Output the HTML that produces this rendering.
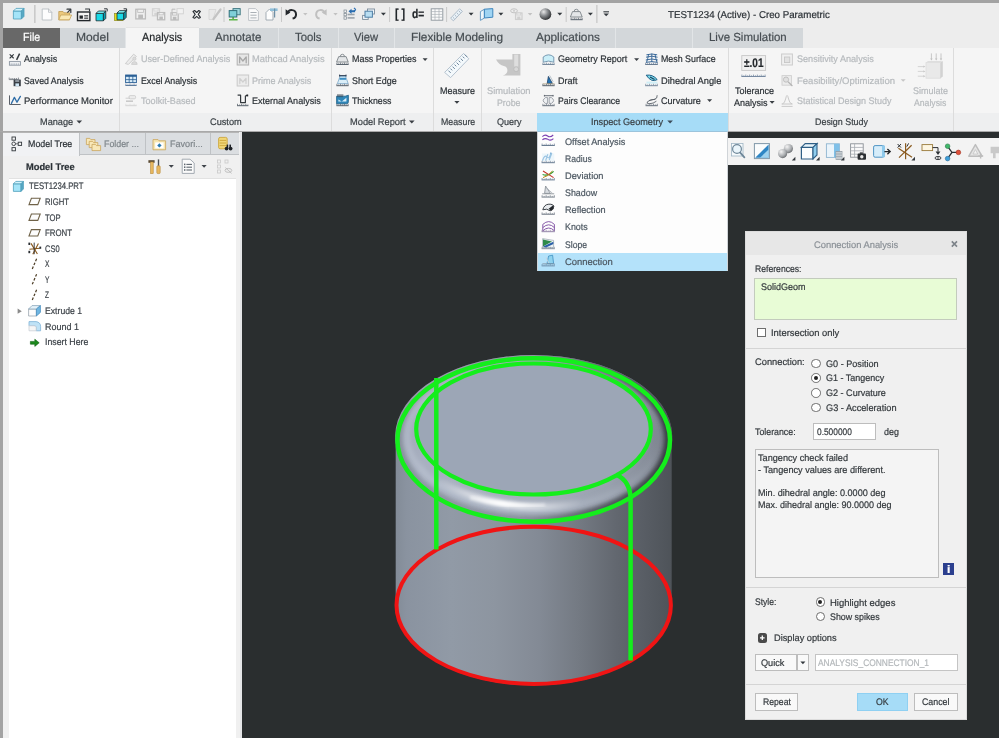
<!DOCTYPE html>
<html><head><meta charset="utf-8"><title>Creo Parametric</title>
<style>
*{box-sizing:border-box;margin:0;padding:0}
html,body{width:999px;height:738px;overflow:hidden;background:#a3a3a3}
body{font-family:"Liberation Sans",sans-serif;font-size:11px;color:#2d3338;position:relative;text-rendering:geometricPrecision}
.abs,.t,.tab,.sep,.ico,svg{position:absolute}
.t{white-space:nowrap;transform-origin:0 50%;color:#2b3136;-webkit-text-stroke:0.2px currentColor}
.dis{color:#b6babd}
.w{color:#fff}
#title{left:3px;top:2.6px;width:996px;height:46px;background:#ededed}
#tabs{left:3px;top:28.4px;width:996px;height:19.6px;background:#f0f0f0}
#tabbg{left:3px;top:28.4px;width:800px;height:19.6px;background:#e2e5e7}
.tab{top:0;height:19.6px;background:#d3d7da}
.tab.file{background:#686868}
.tab.act{background:#f5f5f5;top:-1.6px;height:21.2px;border-top:1px solid #e4e4e4}
#ribbon{left:3px;top:48px;width:996px;height:65px;background:#f5f5f5}
#labels{left:3px;top:113px;width:996px;height:18px;background:#eeeff0}
#insp{left:537px;top:113px;width:191px;height:18px;background:#a6dcf7}
.sep{top:48px;width:1px;height:83px;background:#dcdcdc}
#gfx{left:242px;top:132px;width:757px;height:606px;background:#2a2e2f}
#left{left:3px;top:132px;width:239px;height:606px;background:#f0f0f0}
.tb{color:#464d52}
.tba{color:#1f2326}
.lb{color:#3a4045}
.pt{color:#2b3136}
.ptg{color:#7d8489}
.hd{color:#2b3136}
.tr{color:#3c4248}
.mn{color:#4b5660}
.dt{color:#8b9197}
.dl{color:#33383c}
.ph{color:#b3b7ba}
#ptabs{left:3px;top:132px;width:236px;height:23px;background:#dcdcdc;border-top:1px solid #b5b5b5}
.ptab{position:absolute;top:0;height:22px;border-right:1px solid #bfc2c5;border-bottom:1px solid #bfc2c5;background:#dbdee1}
.ptab.on{background:#f1f2f4;border-bottom:none;height:23px}
#tree{left:9.4px;top:178px;width:227px;height:560px;background:#fff;border-top:1px solid #e2e2e2}
#lstrip{left:239.5px;top:132px;width:2.5px;height:606px;background:#e4e5e7}
#uline{left:0;top:130.6px;width:999px;height:1.9px;background:#a9a9a9}
#gtb{left:728px;top:138px;width:271px;height:27px;background:#f3f3f3}
#menu{left:537px;top:131px;width:191px;height:140px;background:#fdfdfd;border:1px solid #d0d4d8;border-top:1px solid #9cc4dc}
#menuhl{left:538px;top:253px;width:189px;height:17.5px;background:#b4e2fa}
#dlg{left:745.2px;top:231.2px;width:221.8px;height:488.8px;background:#f0f0f0;border:1px solid #dcdcdc}
#dlgt{left:746.2px;top:232.2px;width:219.8px;height:22.8px;background:#e7e7e7}
.hr{position:absolute;left:746.2px;width:219.8px;height:1px;background:#d4d4d4}
.box{position:absolute;border:1px solid #bdbdbd;background:#fff}
.btn{position:absolute;border:1px solid #bdbdbd;background:#f9f9f9}
.rad{position:absolute;width:9.6px;height:9.6px;border:1px solid #6e6e6e;border-radius:50%;background:#fff}
.rad.on::after{content:"";position:absolute;left:1.8px;top:1.8px;width:4px;height:4px;border-radius:50%;background:#222}
.qa{color:#22262a}

</style></head><body>
<div id="title" class="abs"></div>
<div id="tabbg" class="abs"></div>
<div id="tabs" class="abs" style="background:none"><div class="tab file" style="left:0.0px;width:57.2px"></div><div class="tab " style="left:57.2px;width:64.8px"></div><div class="tab act" style="left:122.6px;width:73.4px"></div><div class="tab " style="left:196.0px;width:78.7px"></div><div class="tab " style="left:275.5px;width:59.3px"></div><div class="tab " style="left:335.6px;width:55.6px"></div><div class="tab " style="left:392.0px;width:124.6px"></div><div class="tab " style="left:517.4px;width:94.6px"></div><div class="tab " style="left:612.8px;width:76.2px"></div><div class="tab " style="left:689.8px;width:110.2px"></div></div>
<div id="ribbon" class="abs"></div>
<div id="labels" class="abs"></div>
<div id="insp" class="abs"></div>
<div class="sep" style="left:119px"></div><div class="sep" style="left:331px"></div><div class="sep" style="left:433px"></div><div class="sep" style="left:481px"></div><div class="sep" style="left:728px"></div><div class="sep" style="left:953px"></div>
<div id="left" class="abs"></div>
<div id="gfx" class="abs"></div>
<div id="uline" class="abs"></div>
<div id="ptabs" class="abs"><div class="ptab on" style="left:0;width:77px"></div><div class="ptab" style="left:77px;width:65.5px"></div><div class="ptab" style="left:142.5px;width:65.5px"></div><div class="ptab" style="left:208px;width:28px;border-right:none"></div></div>
<div id="tree" class="abs"></div>
<div id="lstrip" class="abs"></div>
<svg id="model" style="left:242px;top:132px" width="757" height="606" viewBox="242 132 757 606">
<defs>
<linearGradient id="gside" x1="396" x2="672" y1="0" y2="0" gradientUnits="userSpaceOnUse">
<stop offset="0" stop-color="#838c98"/><stop offset="0.04" stop-color="#8a93a0"/><stop offset="0.2" stop-color="#919aa6"/><stop offset="0.36" stop-color="#8d95a0"/><stop offset="0.52" stop-color="#838a95"/><stop offset="0.66" stop-color="#747a83"/><stop offset="0.8" stop-color="#62676f"/><stop offset="0.92" stop-color="#565b62"/><stop offset="1" stop-color="#4e5359"/>
</linearGradient>
<linearGradient id="ground" x1="396" x2="672" y1="0" y2="0" gradientUnits="userSpaceOnUse">
<stop offset="0" stop-color="#9aa3b2"/><stop offset="0.1" stop-color="#a8b0c0"/><stop offset="0.5" stop-color="#a7afbd"/><stop offset="0.78" stop-color="#98a0ad"/><stop offset="0.92" stop-color="#868d99"/><stop offset="1" stop-color="#70767f"/>
</linearGradient>
<linearGradient id="gdark" x1="396" x2="672" y1="0" y2="0" gradientUnits="userSpaceOnUse">
<stop offset="0" stop-color="#4a4e55" stop-opacity="0.25"/><stop offset="0.45" stop-color="#4a4e55" stop-opacity="0.3"/><stop offset="0.75" stop-color="#3c4046" stop-opacity="0.75"/><stop offset="1" stop-color="#34383d" stop-opacity="0.95"/>
</linearGradient>
<linearGradient id="gmid" x1="396" x2="672" y1="0" y2="0" gradientUnits="userSpaceOnUse">
<stop offset="0" stop-color="#c4ccda" stop-opacity="0.45"/><stop offset="0.5" stop-color="#c0c8d6" stop-opacity="0.45"/><stop offset="0.85" stop-color="#b4bcc9" stop-opacity="0.2"/><stop offset="1" stop-color="#b4bcc9" stop-opacity="0"/>
</linearGradient>
<linearGradient id="ghl" x1="436" x2="585" y1="0" y2="0" gradientUnits="userSpaceOnUse">
<stop offset="0" stop-color="#fff" stop-opacity="0"/><stop offset="0.25" stop-color="#fff" stop-opacity="0.6"/><stop offset="0.45" stop-color="#fff" stop-opacity="1"/><stop offset="0.65" stop-color="#fff" stop-opacity="0.6"/><stop offset="1" stop-color="#fff" stop-opacity="0"/>
</linearGradient>
<filter id="b2" x="-20%" y="-20%" width="140%" height="140%"><feGaussianBlur stdDeviation="2.2"/></filter>
<filter id="b1" x="-20%" y="-20%" width="140%" height="140%"><feGaussianBlur stdDeviation="1.5"/></filter>
<clipPath id="csil"><ellipse cx="533.7" cy="436" rx="138.5" ry="81"/><ellipse cx="533.7" cy="440" rx="138" ry="83.4"/></clipPath>
</defs>
<path d="M395.7 438 L395.7 605.3 A138 80 0 0 0 671.7 605.3 L671.7 438 Z" fill="url(#gside)"/>
<g clip-path="url(#csil)">
<rect x="390" y="350" width="290" height="180" fill="url(#ground)"/>
<ellipse cx="533.7" cy="439" rx="135" ry="81" fill="none" stroke="url(#gdark)" stroke-width="9" filter="url(#b2)"/>
<ellipse cx="533.6" cy="435.5" rx="127" ry="74" fill="none" stroke="url(#gmid)" stroke-width="7" filter="url(#b2)"/>
<path d="M440 481 Q466 497 503 503.6 T580 502.5" fill="none" stroke="url(#ghl)" stroke-width="6" filter="url(#b2)"/>
<path d="M470 497.5 Q486 502 505 504 T545 505" fill="none" stroke="url(#ghl)" stroke-width="3.4" filter="url(#b1)"/>
</g>
<ellipse cx="533.5" cy="429.3" rx="117.5" ry="65.3" fill="#9ca6b6"/>
<g fill="none" stroke-linecap="butt">
<ellipse cx="533.7" cy="605.3" rx="137.2" ry="78.6" stroke="#f01414" stroke-width="4"/>
<path d="M436.3 378 L436.3 549.5" stroke="#14ee1c" stroke-width="4.5"/>
<path d="M616 474.5 Q630.6 481 630.6 500 L630.6 660.5" stroke="#14ee1c" stroke-width="4.5"/>
<ellipse cx="533.7" cy="440" rx="136.3" ry="81.8" stroke="#14ee1c" stroke-width="4.5"/>
<ellipse cx="533.5" cy="429" rx="117.3" ry="65.5" stroke="#14ee1c" stroke-width="4.2"/>
</g>
</svg>
<div id="gtb" class="abs"></div>
<div id="menu" class="abs"></div>
<div id="menuhl" class="abs"></div>
<div id="dlg" class="abs"></div>
<div id="dlgt" class="abs"></div>
<div class="hr" style="top:348px"></div>
<div class="hr" style="top:587px"></div>
<div class="hr" style="top:684px"></div>
<div class="box" style="left:754.4px;top:278px;width:203px;height:42.4px;background:#e8fcd6;border-color:#c3cbbd"></div>
<div class="box" style="left:756.5px;top:327.5px;width:9.5px;height:9.5px;border-color:#6e6e6e"></div>
<div class="rad" style="left:811px;top:358.5px"></div>
<div class="rad on" style="left:811px;top:373.2px"></div>
<div class="rad" style="left:811px;top:388.1px"></div>
<div class="rad" style="left:811px;top:402.8px"></div>
<div class="box" style="left:813px;top:423px;width:62.6px;height:17.4px"></div>
<div class="box" style="left:755px;top:449px;width:183.5px;height:128.5px;background:#f4f4f4"></div>
<div class="abs" style="left:942.5px;top:563px;width:11.5px;height:12px;background:#2b3f8e"></div>
<div class="rad on" style="left:815.5px;top:597.3px"></div>
<div class="rad" style="left:815.5px;top:611.8px"></div>
<div class="abs" style="left:757.5px;top:633px;width:9.5px;height:9.5px;background:#4a4a4a;border-radius:2.5px"></div>
<div class="btn" style="left:755px;top:654px;width:42px;height:17px"></div>
<div class="btn" style="left:796.5px;top:654px;width:12.5px;height:17px"></div>
<div class="box" style="left:814.5px;top:654px;width:143px;height:17px;border-color:#c4c4c4"></div>
<div class="btn" style="left:755px;top:693px;width:43px;height:17.5px"></div>
<div class="btn" style="left:857px;top:693px;width:50.5px;height:17.5px;background:#a6dcf7;border-color:#8fd0f2"></div>
<div class="btn" style="left:914px;top:693px;width:43.5px;height:17.5px"></div>

<!--ICONS--><svg id="icons" style="left:0;top:0;pointer-events:none" width="999" height="738" viewBox="0 0 999 738">
<path d="M13.4 11L21.4 11L21.4 19L13.4 19Z" fill="#a4e4f8" stroke="#4f9fbb" stroke-width="0.8"/>
<path d="M13.4 11L16 8.4L24 8.4L21.4 11Z" fill="#d2f3fc" stroke="#4f9fbb" stroke-width="0.8"/>
<path d="M21.4 11L24 8.4L24 16.4L21.4 19Z" fill="#58a9c4" stroke="#4f9fbb" stroke-width="0.8"/>
<path d="M34.9 5L34.9 23" stroke="#b4b4b4" stroke-width="1" fill="none"/>
<path d="M42.2 9L48.5 9L51.8 12.3L51.8 20L42.2 20Z" fill="#fdfdfd" stroke="#b9bec3" stroke-width="0.9"/>
<path d="M48.5 9L48.5 12.3L51.8 12.3" fill="none" stroke="#b9bec3" stroke-width="0.8" stroke-linejoin="round" stroke-linecap="round"/>
<path d="M58.8 11.5L63 11.5L64 12.8L69.5 12.8L69.5 19.8L58.8 19.8Z" fill="#ecc97c" stroke="#c09a50" stroke-width="0.8"/>
<path d="M60.8 15L71.6 15L69.5 19.8L58.8 19.8Z" fill="#fbe9b4" stroke="#c8a45c" stroke-width="0.8"/>
<path d="M67 9.2L70.8 9.2L70.8 12.6" fill="none" stroke="#33383d" stroke-width="1.2" stroke-linejoin="round" stroke-linecap="round"/>
<path d="M70.5 9.5L67.3 12.6" stroke="#33383d" stroke-width="1.1" fill="none"/>
<rect x="77.5" y="12" width="12.4" height="8.6" fill="#f4f4f4" stroke="#23272b" stroke-width="1.4"/>
<rect x="79.5" y="15.5" width="3.4" height="3.2" fill="#23272b"/>
<rect x="84.2" y="15.3" width="4" height="1.1" fill="#23272b"/>
<rect x="84.2" y="17.6" width="4" height="1.1" fill="#23272b"/>
<path d="M85.5 9L89.5 9L89.5 11" fill="none" stroke="#33383d" stroke-width="1.1" stroke-linejoin="round" stroke-linecap="round"/>
<path d="M96 13.4L103.4 13.4L103.4 20.8L96 20.8Z" fill="#19d9e6" stroke="#1d2b30" stroke-width="0.8"/>
<path d="M96 13.4L98.4 11L105.8 11L103.4 13.4Z" fill="#7ff1f5" stroke="#1d2b30" stroke-width="0.8"/>
<path d="M103.4 13.4L105.8 11L105.8 18.4L103.4 20.8Z" fill="#0a9fb0" stroke="#1d2b30" stroke-width="0.8"/>
<path d="M104.5 8.8L107.2 8.8L107.2 11" fill="none" stroke="#33383d" stroke-width="1" stroke-linejoin="round" stroke-linecap="round"/>
<rect x="114.6" y="13.6" width="8.4" height="7" fill="#e6e01c" stroke="#8c8a20" stroke-width="0.7"/>
<path d="M117 13L123.8 13L123.8 19.8L117 19.8Z" fill="#19d9e6" stroke="#1d2b30" stroke-width="0.8"/>
<path d="M117 13L119.4 10.6L126.2 10.6L123.8 13Z" fill="#7ff1f5" stroke="#1d2b30" stroke-width="0.8"/>
<path d="M123.8 13L126.2 10.6L126.2 17.4L123.8 19.8Z" fill="#0a9fb0" stroke="#1d2b30" stroke-width="0.8"/>
<path d="M124 8.8L126.6 8.8L126.6 11" fill="none" stroke="#33383d" stroke-width="1" stroke-linejoin="round" stroke-linecap="round"/>
<rect x="135.8" y="9.3" width="9.6" height="9.6" fill="#efefef" stroke="#bcbcbc" stroke-width="1.3"/>
<rect x="138.2" y="14.58" width="4.8" height="4.32" fill="#bcbcbc"/>
<rect x="137.72" y="9.3" width="5.76" height="3.07" fill="#efefef" stroke="#bcbcbc" stroke-width="0.8"/>
<rect x="152.5" y="8.8" width="7" height="7" fill="#efefef" stroke="#d4d4d4" stroke-width="1.3"/>
<rect x="154.25" y="12.65" width="3.5" height="3.15" fill="#d4d4d4"/>
<rect x="153.9" y="8.8" width="4.2" height="2.24" fill="#efefef" stroke="#d4d4d4" stroke-width="0.8"/>
<rect x="157.5" y="12.6" width="7.2" height="7.2" fill="#efefef" stroke="#bcbcbc" stroke-width="1.3"/>
<rect x="159.3" y="16.56" width="3.6" height="3.24" fill="#bcbcbc"/>
<rect x="158.94" y="12.6" width="4.32" height="2.3" fill="#efefef" stroke="#bcbcbc" stroke-width="0.8"/>
<rect x="171" y="12.8" width="7.2" height="7.2" fill="#efefef" stroke="#bcbcbc" stroke-width="1.3"/>
<rect x="172.8" y="16.76" width="3.6" height="3.24" fill="#bcbcbc"/>
<rect x="172.44" y="12.8" width="4.32" height="2.3" fill="#efefef" stroke="#bcbcbc" stroke-width="0.8"/>
<rect x="177" y="8.6" width="6.4" height="5.2" fill="#f2f2f2" stroke="#d4d4d4" stroke-width="1"/>
<path d="M172 11.5L172 9.2L175 9.2" fill="none" stroke="#bcbcbc" stroke-width="1" stroke-linejoin="round" stroke-linecap="round"/>
<path d="M193 11.4l1.6-0.9 2.1 2 2.1-2 1.6 0.9-2.2 3 2.2 3-1.6 0.9-2.1-2-2.1 2-1.6-0.9 2.2-3z" fill="#f6f6f6" stroke="#2b3035" stroke-width="1.1" stroke-linejoin="round"/>
<path d="M209 9.5L216 9.5L213 19.5L209 19.5Z" fill="#e9e9e9" stroke="#d4d4d4" stroke-width="0.8"/>
<path d="M220.5 9.5L213.5 19" stroke="#c4c4c4" stroke-width="2.2" fill="none" stroke-linecap="round"/>
<path d="M224 7L224 22" stroke="#c8c8c8" stroke-width="1" fill="none"/>
<rect x="233" y="8.6" width="7.2" height="6.2" fill="#9fd6dc" stroke="#39727c" stroke-width="0.9"/>
<rect x="229.2" y="10.6" width="7.6" height="6.4" fill="#7fd0d8" stroke="#2f6f7a" stroke-width="1"/>
<rect x="232.4" y="17" width="1.4" height="2.2" fill="#4a9a3a"/>
<rect x="229" y="19" width="8.6" height="1.5" fill="#5fb54a"/>
<path d="M248.6 8.6L255.4 8.6L258.4 11.4L258.4 20.4L248.6 20.4Z" fill="#fbfbfb" stroke="#b9bec3" stroke-width="0.9"/>
<path d="M250.4 12.5L256.6 12.5" stroke="#aab0b6" stroke-width="1" fill="none"/>
<path d="M250.4 15.2L256.6 15.2" stroke="#aab0b6" stroke-width="1" fill="none"/>
<path d="M250.4 17.9L256.6 17.9" stroke="#aab0b6" stroke-width="1" fill="none"/>
<path d="M266 12.5L269.5 9L273 12.5L273 20L266 20Z" fill="#fdfdfd" stroke="#9aa4ad" stroke-width="0.9"/>
<rect x="270" y="8.4" width="7.6" height="2.6" fill="#8fbfd9"/>
<path d="M274.6 8.4L274.6 17.5" stroke="#6f8fa6" stroke-width="1.2" fill="none"/>
<path d="M281.5 7L281.5 22" stroke="#c8c8c8" stroke-width="1" fill="none"/>
<path d="M287.6 13.2 A4.3 4.3 0 1 1 292.6 18.6" fill="none" stroke="#24282c" stroke-width="2" stroke-linecap="butt"/>
<path d="M285.6 9.2L290.4 12.6L285.6 15.4Z" fill="#24282c"/>
<path d="M303.1 12.9L307.5 12.9L305.3 15.5Z" fill="#c2c2c2"/>
<path d="M324.6 13.2 A4.3 4.3 0 1 0 319.6 18.6" fill="none" stroke="#c0c0c0" stroke-width="2"/>
<path d="M326.6 9.2L321.8 12.6L326.6 15.4Z" fill="#c0c0c0"/>
<path d="M333.3 12.9L337.7 12.9L335.5 15.5Z" fill="#c2c2c2"/>
<rect x="344" y="10" width="2.4" height="2.4" fill="#f4f4f4" stroke="#7d8891" stroke-width="0.7"/>
<rect x="344" y="13.4" width="2.4" height="2.4" fill="#f4f4f4" stroke="#7d8891" stroke-width="0.7"/>
<rect x="344" y="16.8" width="2.4" height="2.4" fill="#f4f4f4" stroke="#7d8891" stroke-width="0.7"/>
<path d="M347.6 14.5L354.6 14.5" stroke="#9aa3ab" stroke-width="1.6" fill="none"/>
<path d="M347.6 17.9L354.6 17.9" stroke="#9aa3ab" stroke-width="1.6" fill="none"/>
<path d="M348.5 11.3l3-2.6v1.6h3.6v2h-3.6v1.6z" fill="#2a6db0"/>
<path d="M355.8 9.6l-1.8-1.7M355.8 9.6l-1.8 1.7" fill="none" stroke="#2a6db0" stroke-width="1.2"/>
<rect x="367.5" y="9" width="7" height="5" fill="#f1f6fa" stroke="#7b8c9b" stroke-width="0.9"/>
<rect x="362.6" y="15.4" width="5.6" height="4" fill="#f1f6fa" stroke="#7b8c9b" stroke-width="0.9"/>
<rect x="365" y="11.2" width="7.4" height="6" fill="#b9def2" stroke="#4f7fa6" stroke-width="1"/>
<path d="M380.9 12.8L385.9 12.8L383.4 15.6Z" fill="#33383d"/>
<path d="M389.6 7L389.6 22" stroke="#c8c8c8" stroke-width="1" fill="none"/>
<rect x="431.2" y="8.8" width="11.6" height="11.4" fill="#fbfbfb" stroke="#8d959c" stroke-width="0.9"/>
<path d="M431.2 11.6L442.8 11.6" stroke="#a9afb5" stroke-width="0.7" fill="none"/>
<path d="M431.2 14.4L442.8 14.4" stroke="#a9afb5" stroke-width="0.7" fill="none"/>
<path d="M431.2 17.2L442.8 17.2" stroke="#a9afb5" stroke-width="0.7" fill="none"/>
<path d="M435 8.8L435 20.2" stroke="#a9afb5" stroke-width="0.7" fill="none"/>
<path d="M439 8.8L439 20.2" stroke="#a9afb5" stroke-width="0.7" fill="none"/>
<path d="M446.6 7L446.6 22" stroke="#c8c8c8" stroke-width="1" fill="none"/>
<path d="M450.6 18.2L459.6 8.8L462.4 11.4L453.4 20.8Z" fill="#e9f1f7" stroke="#9fb0bf" stroke-width="0.8"/>
<path d="M453 17.4l1.4 1.3M455 15.3l1.4 1.3M457 13.2l1.4 1.3M459 11.1l1.4 1.3" fill="none" stroke="#8a9aaa" stroke-width="0.7"/>
<path d="M468.6 12.8L473.6 12.8L471.1 15.6Z" fill="#33383d"/>
<path d="M480.4 11.6L484.4 9.2L484.4 18L480.4 20.4Z" fill="#eef6fb" stroke="#5d93bd" stroke-width="0.9"/>
<path d="M484.4 9.2L492.8 8.6L492.8 17.2L484.4 18Z" fill="#9fd4f3" stroke="#3f86bd" stroke-width="1"/>
<path d="M498.4 12.8L503.4 12.8L500.9 15.6Z" fill="#33383d"/>
<ellipse cx="514" cy="10.8" rx="3.4" ry="2" fill="#ececec" stroke="#c4c4c4" stroke-width="1"/>
<circle cx="514" cy="10.8" r="0.9" fill="#c4c4c4"/>
<rect x="515.6" y="13" width="6.4" height="6.4" fill="#efefef" stroke="#cfcfcf" stroke-width="1.3"/>
<rect x="517.2" y="16.52" width="3.2" height="2.88" fill="#cfcfcf"/>
<rect x="516.88" y="13" width="3.84" height="2.05" fill="#efefef" stroke="#cfcfcf" stroke-width="0.8"/>
<path d="M527.8 12.9L532.4 12.9L530.1 15.5Z" fill="#c2c2c2"/>
<defs><radialGradient id="gsph" cx="0.35" cy="0.3" r="0.75"><stop offset="0" stop-color="#e8e8e8"/><stop offset="0.45" stop-color="#8a8d90"/><stop offset="1" stop-color="#2a2c2e"/></radialGradient></defs>
<circle cx="545.4" cy="14.2" r="5.9" fill="url(#gsph)"/>
<path d="M557.3 12.8L562.3 12.8L559.8 15.6Z" fill="#33383d"/>
<path d="M566.2 7L566.2 22" stroke="#c8c8c8" stroke-width="1" fill="none"/>
<path d="M574.18 11.6a2.12 2.36 0 1 1 4.25 0" fill="none" stroke="#8b9196" stroke-width="1"/>
<path d="M572.52 11.6L580.08 11.6L582.2 17L570.4 17Z" fill="#e4e6e8" stroke="#7d8388" stroke-width="0.9"/>
<path d="M570.6 19.7L582.6 19.7" stroke="#4a5560" stroke-width="0.9" fill="none"/>
<path d="M571.1 19.4v-1.6M572.93 19.4v-0.9M574.77 19.4v-1.6M576.6 19.4v-0.9M578.43 19.4v-1.6M580.27 19.4v-0.9M582.1 19.4v-1.6" fill="none" stroke="#4a5560" stroke-width="0.7"/>
<path d="M587.9 12.8L592.9 12.8L590.4 15.6Z" fill="#33383d"/>
<path d="M596.9 5L596.9 23" stroke="#bdbdbd" stroke-width="1" fill="none"/>
<path d="M603.4 11.8L609 11.8" stroke="#33383d" stroke-width="1.1" fill="none"/>
<path d="M603.5 13.4L608.9 13.4L606.2 16.2Z" fill="#33383d"/>
<path d="M10 54.6L13.4 58" fill="none" stroke="#33383d" stroke-width="1.1" stroke-linejoin="round" stroke-linecap="round"/>
<path d="M13.4 54.6L10 58" fill="none" stroke="#33383d" stroke-width="1.1" stroke-linejoin="round" stroke-linecap="round"/>
<path d="M19.6 53.6L16.6 59.8" stroke="#33383d" stroke-width="1.5" fill="none"/>
<rect x="9.4" y="61.6" width="11" height="3.6" fill="#f2f4f6" stroke="#8a94a0" stroke-width="0.9"/>
<path d="M11.2 63.4v1.4M13 63.4v1.4M14.8 63.4v1.4M16.6 63.4v1.4M18.4 63.4v1.4" fill="none" stroke="#8a94a0" stroke-width="0.7"/>
<path d="M9.2 77.6v2h9.2v-2M11 78v1.6M12.8 78v1.6M14.6 78v1.6M16.4 78v1.6" fill="none" stroke="#6b727a" stroke-width="0.8"/>
<rect x="13.6" y="79.6" width="7.2" height="6.6" fill="#3b4046"/>
<rect x="15.2" y="79.6" width="4" height="2.4" fill="#8c949c"/>
<rect x="15.4" y="83.4" width="3.6" height="2.8" fill="#cfe6f5"/>
<path d="M9.5 95.4L9.5 104.5L20.6 104.5" fill="none" stroke="#5a6068" stroke-width="1" stroke-linejoin="miter"/>
<path d="M11.4 103.4L14.4 97.4L17 102.2L20.4 96.4" fill="none" stroke="#2f6ea8" stroke-width="1.3" stroke-linejoin="round" stroke-linecap="round"/>
<path d="M125.4 63.6L133.6 54.2L136.4 56.4L128.4 64.4Z" fill="#ececec" stroke="#c9c9c9" stroke-width="0.9"/>
<circle cx="134.4" cy="58.8" r="1.6" fill="#dcdcdc" stroke="#c9c9c9" stroke-width="0.7"/>
<path d="M131.6 64.4a2.8 2.8 0 0 1 5.6 0z" fill="#dcdcdc" stroke="#c9c9c9" stroke-width="0.7"/>
<rect x="125.6" y="75" width="10.8" height="7.6" fill="#d9ecf8" stroke="#2a5f95" stroke-width="0.9"/>
<rect x="125.6" y="75" width="10.8" height="1.8" fill="#2a5f95"/>
<path d="M129.2 75v7.6M132.8 75v7.6M125.6 79.6h10.8" fill="none" stroke="#2a5f95" stroke-width="0.8"/>
<path d="M125.4 85.5L136.6 85.5" stroke="#4e6f95" stroke-width="0.9" fill="none"/>
<path d="M125.9 85.2v-1.6M127.94 85.2v-0.9M129.98 85.2v-1.6M132.02 85.2v-0.9M134.06 85.2v-1.6M136.1 85.2v-0.9" fill="none" stroke="#4e6f95" stroke-width="0.7"/>
<rect x="129" y="95.6" width="6.6" height="3.2" fill="#ececec" stroke="#c9c9c9" stroke-width="0.8" rx="1.2"/>
<path d="M125.6 98.2L130 98.2" stroke="#c9c9c9" stroke-width="0.9" fill="none"/>
<rect x="126" y="100.4" width="7" height="1.6" fill="#c9c9c9"/>
<path d="M125.4 105.7L136.6 105.7" stroke="#d2d2d2" stroke-width="0.9" fill="none"/>
<path d="M125.9 105.4v-1.6M127.94 105.4v-0.9M129.98 105.4v-1.6M132.02 105.4v-0.9M134.06 105.4v-1.6M136.1 105.4v-0.9" fill="none" stroke="#d2d2d2" stroke-width="0.7"/>
<rect x="237.2" y="54" width="11.4" height="11" fill="#e6e6e6" stroke="#b5b5b5" stroke-width="1.1"/>
<path d="M239.6 62.8L239.6 57L242.9 61L246.2 57L246.2 62.8" fill="none" stroke="#a8a8a8" stroke-width="1.3" stroke-linejoin="round" stroke-linecap="round"/>
<rect x="237.2" y="75" width="11.4" height="11" fill="#ececec" stroke="#cdcdcd" stroke-width="1.1"/>
<path d="M239.8 83.6L239.8 78.4L242.9 82L246 78.4L246 83.6" fill="none" stroke="#cfcfcf" stroke-width="1.2" stroke-linejoin="round" stroke-linecap="round"/>
<path d="M237.6 95.2L240.6 95.2L240.6 102.6L245.4 102.6L245.4 96L247.6 95" fill="none" stroke="#33383d" stroke-width="1.2" stroke-linejoin="round"/>
<rect x="246.4" y="94.6" width="1.8" height="1.8" fill="#22262a"/>
<path d="M237 105.7L248.4 105.7" stroke="#4a5560" stroke-width="0.9" fill="none"/>
<path d="M237.5 105.4v-1.6M239.58 105.4v-0.9M241.66 105.4v-1.6M243.74 105.4v-0.9M245.82 105.4v-1.6M247.9 105.4v-0.9" fill="none" stroke="#4a5560" stroke-width="0.7"/>
<path d="M340.31 56.6a2.09 2.32 0 1 1 4.18 0" fill="none" stroke="#8b9196" stroke-width="1"/>
<path d="M338.69 56.6L346.11 56.6L348.2 62L336.6 62Z" fill="#e4e6e8" stroke="#7d8388" stroke-width="0.9"/>
<path d="M336.4 64.5L348.6 64.5" stroke="#4a5560" stroke-width="0.9" fill="none"/>
<path d="M336.9 64.2v-1.6M338.77 64.2v-0.9M340.63 64.2v-1.6M342.5 64.2v-0.9M344.37 64.2v-1.6M346.23 64.2v-0.9M348.1 64.2v-1.6" fill="none" stroke="#4a5560" stroke-width="0.7"/>
<path d="M340 76.4L345.6 76.4L348.2 83.6L337.4 83.6Z" fill="#dbeef8" stroke="#7aa7c8" stroke-width="0.8"/>
<rect x="339.6" y="77.8" width="6.4" height="2" fill="#3f8fc4"/>
<path d="M339.4 75.6h6.8M339.6 74.6v2M346 74.6v2" fill="none" stroke="#2f3f55" stroke-width="1"/>
<path d="M336.4 85.7L348.6 85.7" stroke="#4a5560" stroke-width="0.9" fill="none"/>
<path d="M336.9 85.4v-1.6M338.77 85.4v-0.9M340.63 85.4v-1.6M342.5 85.4v-0.9M344.37 85.4v-1.6M346.23 85.4v-0.9M348.1 85.4v-1.6" fill="none" stroke="#4a5560" stroke-width="0.7"/>
<path d="M336.6 96.2h8.6l3.2-1v6.6a2 2 0 0 1-2 2h-9.8z" fill="#2f86b8" stroke="#1e5f86" stroke-width="0.8"/>
<path d="M338.4 99.4l3.4 2 4.6-3.6v3.8h-8z" fill="#d8eefa"/>
<path d="M337 95h6.4M338 95.8v1.4M340 95.8v1.4M342 95.8v1.4" fill="none" stroke="#2a3440" stroke-width="0.8"/>
<path d="M336.4 105.7L348.6 105.7" stroke="#4a5560" stroke-width="0.9" fill="none"/>
<path d="M336.9 105.4v-1.6M338.77 105.4v-0.9M340.63 105.4v-1.6M342.5 105.4v-0.9M344.37 105.4v-1.6M346.23 105.4v-0.9M348.1 105.4v-1.6" fill="none" stroke="#4a5560" stroke-width="0.7"/>
<path d="M444.6 72.4L463.6 53.4L468.8 58.8L450.6 77.6Z" fill="#f4f9fc" stroke="#aebccb" stroke-width="0.9"/>
<path d="M448.4 70.6l2.3 2.3M450.45 68.6l1.73 1.73M452.5 66.6l2.3 2.3M454.55 64.6l1.73 1.73M456.6 62.6l2.3 2.3M458.65 60.6l1.73 1.73M460.7 58.6l2.3 2.3M462.75 56.6l1.73 1.73M464.8 54.6l2.3 2.3" fill="none" stroke="#5f7890" stroke-width="0.9"/>
<path d="M454.3 101L459.5 101L456.9 103.8Z" fill="#3a3f44"/>
<path d="M496 59.6h16.4v-5.6h8v21.6h-17.6q4.6-1.6 4.6-5.2q0-3.6-3.6-4.4q-4.6-0.6-7.8-6.4z" fill="#c6c6c6"/>
<rect x="514.2" y="54.6" width="4" height="12" fill="#dedede"/>
<circle cx="516.2" cy="69.2" r="2.4" fill="#d8d8d8" stroke="#b4b4b4" stroke-width="0.6"/>
<path d="M543.2 62.2v-5.2q5.4-4.4 10.6 0v5.2q-5.4-2.2-10.6 0z" fill="#c9eef8" stroke="#6d90aa" stroke-width="0.9"/>
<path d="M542.4 64.5L554.6 64.5" stroke="#6a7f95" stroke-width="0.9" fill="none"/>
<path d="M542.9 64.2v-1.6M544.77 64.2v-0.9M546.63 64.2v-1.6M548.5 64.2v-0.9M550.37 64.2v-1.6M552.23 64.2v-0.9M554.1 64.2v-1.6" fill="none" stroke="#6a7f95" stroke-width="0.7"/>
<path d="M548.4 76.4L552.4 83.4L547.2 83.4Z" fill="#2474b5" stroke="#1b3f66" stroke-width="0.8"/>
<path d="M549.6 75.4l3.6 6.4" fill="none" stroke="#b9c4cc" stroke-width="1"/>
<path d="M542.8 83.8L554.4 83.8" stroke="#b9a989" stroke-width="0.8" fill="none"/>
<path d="M542.4 85.7L554.6 85.7" stroke="#4a5560" stroke-width="0.9" fill="none"/>
<path d="M542.9 85.4v-1.6M544.77 85.4v-0.9M546.63 85.4v-1.6M548.5 85.4v-0.9M550.37 85.4v-1.6M552.23 85.4v-0.9M554.1 85.4v-1.6" fill="none" stroke="#4a5560" stroke-width="0.7"/>
<path d="M545.4 97.6q-4.4 3 0 5.8h2.2v-5.8zM551.4 97.6q4.4 3 0 5.8h-2.2v-5.8z" fill="#eef0f2" stroke="#8a9199" stroke-width="0.8"/>
<path d="M544 95.7h9.4M544.4 94.9v1.6M553 94.9v1.6" fill="none" stroke="#5a626b" stroke-width="0.9"/>
<path d="M542.4 105.7L554.6 105.7" stroke="#5a6572" stroke-width="0.9" fill="none"/>
<path d="M542.9 105.4v-1.6M544.77 105.4v-0.9M546.63 105.4v-1.6M548.5 105.4v-0.9M550.37 105.4v-1.6M552.23 105.4v-0.9M554.1 105.4v-1.6" fill="none" stroke="#5a6572" stroke-width="0.7"/>
<path d="M646 57.2q5.8-2 11.6 0M645.8 60q6-2 12 0M646 62.4q5.8-1.6 11.6 0M648.6 54.2q-0.6 4-2 8M651.8 53.6v8.6M655 54.2q0.6 4 2 8M646.4 54.8q5.4-1.6 10.8 0" fill="none" stroke="#2d5f92" stroke-width="0.9"/>
<path d="M645.2 64.5L657.8 64.5" stroke="#5a6f88" stroke-width="0.9" fill="none"/>
<path d="M645.7 64.2v-1.6M647.63 64.2v-0.9M649.57 64.2v-1.6M651.5 64.2v-0.9M653.43 64.2v-1.6M655.37 64.2v-0.9M657.3 64.2v-1.6" fill="none" stroke="#5a6f88" stroke-width="0.7"/>
<path d="M646.2 75.2q6.6-1 11 4.4q-5.6 3.4-11-4.4z" fill="#7fdcec" stroke="#1f5f86" stroke-width="1"/>
<path d="M650 77l4.6 2.4" fill="none" stroke="#15405c" stroke-width="1.1"/>
<path d="M646.4 81.6h11v2h-11z" fill="#cfeef6"/>
<path d="M645.2 85.7L657.8 85.7" stroke="#6a7f95" stroke-width="0.9" fill="none"/>
<path d="M645.7 85.4v-1.6M647.63 85.4v-0.9M649.57 85.4v-1.6M651.5 85.4v-0.9M653.43 85.4v-1.6M655.37 85.4v-0.9M657.3 85.4v-1.6" fill="none" stroke="#6a7f95" stroke-width="0.7"/>
<path d="M657.2 95.2q0.4 3.6-3 4.2q-5 0.6-6.8 2.4q-1.2 1.8 1.6 2q4.6-0.2 7.4-2.6M649 100.6q3-1.4 6.4-1.2" fill="none" stroke="#5b626a" stroke-width="0.9"/>
<path d="M645.6 105.7L657.8 105.7" stroke="#5a6572" stroke-width="0.9" fill="none"/>
<path d="M646.1 105.4v-1.6M647.97 105.4v-0.9M649.83 105.4v-1.6M651.7 105.4v-0.9M653.57 105.4v-1.6M655.43 105.4v-0.9M657.3 105.4v-1.6" fill="none" stroke="#5a6572" stroke-width="0.7"/>
<path d="M422.6 58.2L427.6 58.2L425.1 61Z" fill="#3a3f44"/>
<path d="M634.1 58.2L639.1 58.2L636.6 61Z" fill="#3a3f44"/>
<path d="M707.1 99.2L712.1 99.2L709.6 102Z" fill="#3a3f44"/>
<path d="M900.7 79.2L905.7 79.2L903.2 81.8Z" fill="#c6c6c6"/>
<path d="M76.5 120.4L82.1 120.4L79.3 123.4Z" fill="#3a3f44"/>
<path d="M409 120.4L414.6 120.4L411.8 123.4Z" fill="#3a3f44"/>
<path d="M667.3 120.4L672.9 120.4L670.1 123.4Z" fill="#3a4a58"/>
<rect x="741.8" y="55.6" width="23.8" height="14.8" fill="#f0f0f0" stroke="#c6c6c6" stroke-width="0.9"/>
<path d="M741.4 76.5L765.6 76.5" stroke="#6a7f99" stroke-width="0.9" fill="none"/>
<path d="M741.9 76.2v-1.6M743.83 76.2v-0.9M745.77 76.2v-1.6M747.7 76.2v-0.9M749.63 76.2v-1.6M751.57 76.2v-0.9M753.5 76.2v-1.6M755.43 76.2v-0.9M757.37 76.2v-1.6M759.3 76.2v-0.9M761.23 76.2v-1.6M763.17 76.2v-0.9M765.1 76.2v-1.6" fill="none" stroke="#6a7f99" stroke-width="0.7"/>
<path d="M769.5 100.9L774.7 100.9L772.1 103.7Z" fill="#3a3f44"/>
<rect x="781.6" y="54" width="10.8" height="11" fill="#f0f0f0" stroke="#cccccc" stroke-width="1"/>
<rect x="784.4" y="57" width="5.4" height="5.6" fill="#e2e2e2" stroke="#c4c4c4" stroke-width="0.8"/>
<rect x="782" y="75.6" width="9.4" height="9.6" fill="#ececec" stroke="#cfcfcf" stroke-width="0.9"/>
<circle cx="786" cy="79.6" r="2.6" fill="#e0e0e0" stroke="#b8b8b8" stroke-width="0.8"/>
<path d="M788 81.8L792.4 86" stroke="#b4b4b4" stroke-width="1.2" fill="none"/>
<path d="M781.6 104h11M782.2 104q2.6-0.6 3.4-5q0.8-3.6 1.4-3.6q0.8 0 1.6 3.6q0.8 4.4 3.4 5M781.6 106.4h11" fill="none" stroke="#c4c4c4" stroke-width="0.9"/>
<rect x="926" y="62.6" width="14.4" height="15.6" fill="#e9e9e9" stroke="#dcdcdc" stroke-width="0.8"/>
<path d="M940.4 62.6L942.8 61L942.8 76.4L940.4 78.2Z" fill="#d2d2d2"/>
<path d="M926 62.6L928 61L942.8 61L940.4 62.6Z" fill="#dedede"/>
<path d="M931.4 53.4L931.4 59" stroke="#c2c2c2" stroke-width="0.9" fill="none"/>
<path d="M930.2 58.4L932.6 58.4L931.4 60.4Z" fill="#bdbdbd"/>
<path d="M936.2 53.4L936.2 59" stroke="#c2c2c2" stroke-width="0.9" fill="none"/>
<path d="M935 58.4L937.4 58.4L936.2 60.4Z" fill="#bdbdbd"/>
<path d="M941 53.4L941 59" stroke="#c2c2c2" stroke-width="0.9" fill="none"/>
<path d="M939.8 58.4L942.2 58.4L941 60.4Z" fill="#bdbdbd"/>
<path d="M917.8 66.6L924 66.6" stroke="#d0d0d0" stroke-width="0.9" fill="none"/>
<path d="M923.4 65.4L925.4 66.6L923.4 67.8Z" fill="#c8c8c8"/>
<path d="M917.8 71.4L924 71.4" stroke="#d0d0d0" stroke-width="0.9" fill="none"/>
<path d="M923.4 70.2L925.4 71.4L923.4 72.6Z" fill="#c8c8c8"/>
<path d="M917.8 76.2L924 76.2" stroke="#d0d0d0" stroke-width="0.9" fill="none"/>
<path d="M923.4 75L925.4 76.2L923.4 77.4Z" fill="#c8c8c8"/>
<rect x="12" y="137" width="3.4" height="3.2" fill="#f4f4f4" stroke="#33383d" stroke-width="0.9"/>
<circle cx="13.7" cy="143.8" r="1.8" fill="#f4f4f4" stroke="#33383d" stroke-width="0.9"/>
<rect x="12" y="147.6" width="3.4" height="3.2" fill="#f4f4f4" stroke="#33383d" stroke-width="0.9"/>
<rect x="18.2" y="142.2" width="3.4" height="3.2" fill="#f4f4f4" stroke="#33383d" stroke-width="0.9"/>
<path d="M15.6 143.8L18.2 143.8" stroke="#33383d" stroke-width="0.7" fill="none"/>
<path d="M86.4 138.4h3.44l1 1.2h4.16v5h-8.6z" fill="#f8e8b8" stroke="#c9a55a" stroke-width="0.8"/>
<path d="M89.2 141.4h3.44l1 1.2h4.16v5h-8.6z" fill="#f8e8b8" stroke="#c9a55a" stroke-width="0.8"/>
<path d="M92 144.4h3.44l1 1.2h4.16v5h-8.6z" fill="#f8e8b8" stroke="#c9a55a" stroke-width="0.8"/>
<path d="M153 139.6h5.04l1 1.2h6.56v9h-12.6z" fill="#f6e6b2" stroke="#c9a55a" stroke-width="0.8"/>
<rect x="155.2" y="142.4" width="8.4" height="6" fill="#ffffff"/>
<path d="M159.4 143.2L161.6 145.4L159.4 147.6L157.2 145.4Z" fill="#2a7ab0"/>
<rect x="218.6" y="137.4" width="8.6" height="11.4" fill="#f1d778" stroke="#c9a030" stroke-width="0.8" rx="1.5"/>
<path d="M219.6 140.4h6.6M219.6 143h6.6M219.6 145.6h6.6" fill="none" stroke="#c9a030" stroke-width="0.8"/>
<circle cx="226.6" cy="148.6" r="1.9" fill="#1e2226"/>
<circle cx="230.6" cy="148.6" r="1.9" fill="#1e2226"/>
<rect x="226.6" y="144.6" width="1.6" height="3.6" fill="#1e2226"/>
<rect x="229.4" y="144.6" width="1.6" height="3.6" fill="#1e2226"/>
<rect x="148.4" y="160.2" width="6.2" height="2.6" fill="#5a4a32"/>
<rect x="150.6" y="162" width="2.6" height="11.6" fill="#e8b860" stroke="#b78a3a" stroke-width="0.6"/>
<rect x="157.8" y="159.4" width="1.4" height="7" fill="#4a4f55"/>
<rect x="156.8" y="165.8" width="3.4" height="7.8" fill="#e8b860" stroke="#b78a3a" stroke-width="0.6" rx="1"/>
<path d="M168.7 164.9L173.9 164.9L171.3 167.7Z" fill="#3f444a"/>
<path d="M182.2 159.2L190 159.2L194.2 163L194.2 173.4L182.2 173.4Z" fill="#fbfbfb" stroke="#9aa2aa" stroke-width="0.9"/>
<path d="M186.4 164.4L192 164.4" stroke="#5f6870" stroke-width="1.1" fill="none"/>
<rect x="184" y="163.6" width="1.4" height="1.6" fill="#5f6870"/>
<path d="M186.4 167.2L192 167.2" stroke="#5f6870" stroke-width="1.1" fill="none"/>
<rect x="184" y="166.4" width="1.4" height="1.6" fill="#5f6870"/>
<path d="M186.4 170L192 170" stroke="#5f6870" stroke-width="1.1" fill="none"/>
<rect x="184" y="169.2" width="1.4" height="1.6" fill="#5f6870"/>
<path d="M201.5 164.9L206.7 164.9L204.1 167.7Z" fill="#3f444a"/>
<rect x="217.4" y="160" width="3" height="3" fill="#f0f0f0" stroke="#c9c9c9" stroke-width="0.8"/>
<rect x="217.4" y="165" width="3" height="3" fill="#f0f0f0" stroke="#c9c9c9" stroke-width="0.8"/>
<rect x="217.4" y="170" width="3" height="3" fill="#f0f0f0" stroke="#c9c9c9" stroke-width="0.8"/>
<rect x="225" y="160" width="3" height="3" fill="#f0f0f0" stroke="#c9c9c9" stroke-width="0.8"/>
<ellipse cx="228.4" cy="170.4" rx="3.4" ry="2" fill="#ececec" stroke="#bdbdbd" stroke-width="0.9"/>
<path d="M225.4 167.6L231.6 173.4" stroke="#bdbdbd" stroke-width="0.9" fill="none"/>
<path d="M13.4 183.8L21 183.8L21 191.4L13.4 191.4Z" fill="#a4e4f8" stroke="#4f9fbb" stroke-width="0.8"/>
<path d="M13.4 183.8L15.8 181.4L23.4 181.4L21 183.8Z" fill="#d2f3fc" stroke="#4f9fbb" stroke-width="0.8"/>
<path d="M21 183.8L23.4 181.4L23.4 189L21 191.4Z" fill="#58a9c4" stroke="#4f9fbb" stroke-width="0.8"/>
<path d="M31.4 198.2L40.2 198.2L37.8 204.6L29 204.6Z" fill="#fdfdfd" stroke="#6f6248" stroke-width="1.1"/>
<path d="M31.4 214L40.2 214L37.8 220.4L29 220.4Z" fill="#fdfdfd" stroke="#6f6248" stroke-width="1.1"/>
<path d="M31.4 229.6L40.2 229.6L37.8 236L29 236Z" fill="#fdfdfd" stroke="#6f6248" stroke-width="1.1"/>
<path d="M31 243.4l6.4 10.6M38.4 243.4l-5.6 10.8M29.4 249.2l10.4-1" fill="none" stroke="#8a5a1e" stroke-width="1.1"/>
<path d="M34.2 242.6v11.6" fill="none" stroke="#2a2e32" stroke-width="0.9"/>
<rect x="28.4" y="242.6" width="1.8" height="2.4" fill="#2a2e32"/>
<rect x="28.4" y="250.8" width="1.8" height="2.4" fill="#2a2e32"/>
<rect x="39.4" y="246.6" width="1.8" height="2.2" fill="#2a2e32"/>
<path d="M36.6 258.8L31.8 270" fill="none" stroke="#4a3a22" stroke-width="1.2" stroke-dasharray="2.6 1.6"/>
<path d="M36.6 274.2L31.8 285.4" fill="none" stroke="#4a3a22" stroke-width="1.2" stroke-dasharray="2.6 1.6"/>
<path d="M36.6 289.8L31.8 301" fill="none" stroke="#4a3a22" stroke-width="1.2" stroke-dasharray="2.6 1.6"/>
<path d="M17.6 308.6L21.8 311.2L17.6 313.8Z" fill="#8a8a8a"/>
<path d="M28.6 309L36.4 309L36.4 316L28.6 316Z" fill="#fdfdfd" stroke="#9aa6b0" stroke-width="0.8"/>
<path d="M28.6 309L32 305.6L40.4 305.6L36.4 309Z" fill="#e4f2fa" stroke="#8aa6ba" stroke-width="0.8"/>
<path d="M36.4 309L40.4 305.6L40.4 312.4L36.4 316Z" fill="#6fb6e2" stroke="#4a8fc0" stroke-width="0.8"/>
<path d="M29 321.6h7q4.6 0.6 4.6 5v4.2h-4.4v-3.2q0-1.6-2-1.8h-5.2z" fill="#bfe2f6" stroke="#7fb2d6" stroke-width="0.8"/>
<path d="M29 325.8h5.2q2 0.2 2 1.8v3.2h-7.2z" fill="#f6f6f6" stroke="#c4ccd2" stroke-width="0.7"/>
<path d="M30.4 341.4h4.4v-2.2l4.4 3.6-4.4 3.6v-2.2h-4.4z" fill="#1c8a1c" stroke="#0f5f12" stroke-width="0.6"/>
<path d="M542.4 136.6q2.6-2.6 5.2-0.6t5.6-1M542.4 139.8q2.8-2.2 5.6-0.4t5.4-0.8" fill="none" stroke="#7a3fb0" stroke-width="1.1"/>
<path d="M541.6 145.5L554.8 145.5" stroke="#5a6f88" stroke-width="0.9" fill="none"/>
<path d="M542.1 145.2v-1.6M544.13 145.2v-0.9M546.17 145.2v-1.6M548.2 145.2v-0.9M550.23 145.2v-1.6M552.27 145.2v-0.9M554.3 145.2v-1.6" fill="none" stroke="#5a6f88" stroke-width="0.7"/>
<path d="M542.6 160.6q2-6.4 4.4-3.6t4-4.4M545.6 160.6l2.2-6.4M549.2 160l2.6-6.6" fill="none" stroke="#2f7fbf" stroke-width="1.1"/>
<rect x="542.2" y="153.4" width="12" height="7.6" fill="#e3f1fa" opacity="0.6"/>
<path d="M541.6 162.7L554.8 162.7" stroke="#5a6f88" stroke-width="0.9" fill="none"/>
<path d="M542.1 162.4v-1.6M544.13 162.4v-0.9M546.17 162.4v-1.6M548.2 162.4v-0.9M550.23 162.4v-1.6M552.27 162.4v-0.9M554.3 162.4v-1.6" fill="none" stroke="#5a6f88" stroke-width="0.7"/>
<path d="M542.6 174.6q5.6 2 11-3.2" fill="none" stroke="#2e9a2e" stroke-width="1.1"/>
<path d="M543 171l10.6 6.6" fill="none" stroke="#c4302a" stroke-width="1.1"/>
<path d="M543 177.6q5-1 9.4-6.6" fill="none" stroke="#b88a1e" stroke-width="1"/>
<path d="M541.6 179.9L554.8 179.9" stroke="#5a6f88" stroke-width="0.9" fill="none"/>
<path d="M542.1 179.6v-1.6M544.13 179.6v-0.9M546.17 179.6v-1.6M548.2 179.6v-0.9M550.23 179.6v-1.6M552.27 179.6v-0.9M554.3 179.6v-1.6" fill="none" stroke="#5a6f88" stroke-width="0.7"/>
<path d="M545.6 186l4.8 7.4h-5.8zM542.2 193.8h12" fill="#d9dde1" stroke="#8d949b" stroke-width="0.9"/>
<path d="M546 187.4l6.6 6" fill="none" stroke="#aab0b6" stroke-width="0.8"/>
<path d="M541.6 197.1L554.8 197.1" stroke="#6a7480" stroke-width="0.9" fill="none"/>
<path d="M542.1 196.8v-1.6M544.13 196.8v-0.9M546.17 196.8v-1.6M548.2 196.8v-0.9M550.23 196.8v-1.6M552.27 196.8v-0.9M554.3 196.8v-1.6" fill="none" stroke="#6a7480" stroke-width="0.7"/>
<path d="M542.8 209.8q1.4-5.4 6-5.6t5 2.4l-3.4 4.4q-3.6-3-7.6-1.2z" fill="#e9ecef" stroke="#3a4046" stroke-width="1"/>
<path d="M548.6 208.8L553.6 205L553.8 208.8L551.2 211Z" fill="#22262a"/>
<path d="M541.6 214.3L554.8 214.3" stroke="#6a7480" stroke-width="0.9" fill="none"/>
<path d="M542.1 214v-1.6M544.13 214v-0.9M546.17 214v-1.6M548.2 214v-0.9M550.23 214v-1.6M552.27 214v-0.9M554.3 214v-1.6" fill="none" stroke="#6a7480" stroke-width="0.7"/>
<path d="M542.8 224.4q6-5.6 11.6 0M542.8 227.6q6-5.6 11.6 0M542.8 230.8q6-5.6 11.6 0M542.8 224.4v6.4M554.4 224.4v6.4" fill="none" stroke="#7a4aa0" stroke-width="0.9"/>
<path d="M541.6 231.7L554.8 231.7" stroke="#8a7aa0" stroke-width="0.9" fill="none"/>
<path d="M542.1 231.4v-1.6M544.13 231.4v-0.9M546.17 231.4v-1.6M548.2 231.4v-0.9M550.23 231.4v-1.6M552.27 231.4v-0.9M554.3 231.4v-1.6" fill="none" stroke="#8a7aa0" stroke-width="0.7"/>
<path d="M542.6 238.6L553.6 240.4L553.6 247.6L542.6 247.6Z" fill="#eef2f4" stroke="#9aa6b0" stroke-width="0.7"/>
<path d="M543 239.4L552 241.6L543 246.4Z" fill="#2e8a4a"/>
<path d="M543 246.6L553.4 241.8L553.4 244L546 247.4Z" fill="#2a5fa8"/>
<path d="M541.6 248.7L554.8 248.7" stroke="#7a8694" stroke-width="0.9" fill="none"/>
<path d="M542.1 248.4v-1.6M544.13 248.4v-0.9M546.17 248.4v-1.6M548.2 248.4v-0.9M550.23 248.4v-1.6M552.27 248.4v-0.9M554.3 248.4v-1.6" fill="none" stroke="#7a8694" stroke-width="0.7"/>
<path d="M548.6 256L552.6 255.2L553.6 263.6L547 263.6Z" fill="#8fd3ef" stroke="#3f8fc0" stroke-width="0.8"/>
<path d="M542.4 263.8L554.6 263.8" stroke="#7f8f9f" stroke-width="0.8" fill="none"/>
<path d="M546 257.4L548.6 263" stroke="#c8d4dc" stroke-width="0.9" fill="none"/>
<path d="M541.6 265.9L554.8 265.9" stroke="#6a8aa6" stroke-width="0.9" fill="none"/>
<path d="M542.1 265.6v-1.6M544.13 265.6v-0.9M546.17 265.6v-1.6M548.2 265.6v-0.9M550.23 265.6v-1.6M552.27 265.6v-0.9M554.3 265.6v-1.6" fill="none" stroke="#6a8aa6" stroke-width="0.7"/>
<rect x="731.4" y="143.4" width="11.6" height="12.6" fill="#f6fafc" stroke="#9fb4c4" stroke-width="0.8"/>
<circle cx="737" cy="149" r="4.4" fill="#eaf5fb" stroke="#6f8799" stroke-width="1.2"/>
<path d="M740.2 152.6L744.4 157.4" stroke="#6f8799" stroke-width="1.8" fill="none" stroke-linecap="round"/>
<rect x="754.4" y="143.6" width="15" height="15" fill="#fafcfd" stroke="#7f97a8" stroke-width="1"/>
<path d="M768.6 144.4L768.6 157.8L755.2 157.8Z" fill="#2f86c4"/>
<path d="M760 157.8L768.6 149.4L768.6 157.8Z" fill="#9fd2ee"/>
<defs><radialGradient id="gsp2" cx="0.35" cy="0.3" r="0.8"><stop offset="0" stop-color="#f4f4f4"/><stop offset="0.6" stop-color="#a8abae"/><stop offset="1" stop-color="#5a5d60"/></radialGradient></defs>
<circle cx="788.4" cy="148.6" r="4.6" fill="url(#gsp2)"/>
<circle cx="782.6" cy="153.6" r="4.6" fill="url(#gsp2)"/>
<path d="M795.4 156.8L795.4 160.4L791.8 160.4Z" fill="#33383d"/>
<path d="M801.4 147.4L813 147.4L813 159L801.4 159Z" fill="#fbfdfe" stroke="#2f5f86" stroke-width="1.2"/>
<path d="M801.4 147.4L805.2 143.6L817 143.6L813 147.4Z" fill="#e6f3fa" stroke="#2f5f86" stroke-width="1.1"/>
<path d="M813 147.4L817 143.6L817 155L813 159Z" fill="#8fcdee" stroke="#2f5f86" stroke-width="1.1"/>
<path d="M819.6 156.8L819.6 160.4L816 160.4Z" fill="#33383d"/>
<rect x="826.4" y="143.8" width="13" height="13.6" fill="#eaf4fb" stroke="#8fb4d0" stroke-width="0.9"/>
<rect x="834" y="143.8" width="5.4" height="13.6" fill="#7fc0e8"/>
<rect x="836" y="151.4" width="6" height="8" fill="#dfe4e8" stroke="#8a949c" stroke-width="0.7"/>
<path d="M836 154h6M836 156.6h6M838 151.4v8M840 151.4v8" fill="none" stroke="#8a949c" stroke-width="0.6"/>
<path d="M844.4 156.8L844.4 160.4L840.8 160.4Z" fill="#33383d"/>
<rect x="850.6" y="143.8" width="12.6" height="13.4" fill="#fafafa" stroke="#8a9096" stroke-width="0.9"/>
<path d="M850.6 147.4h12.6M850.6 150.8h12.6M850.6 154.2h12.6M854.6 143.8v13.4" fill="none" stroke="#a4aab0" stroke-width="0.8"/>
<rect x="857.6" y="153.4" width="8.4" height="6.4" fill="#2a2e32" rx="1"/>
<circle cx="861.8" cy="156.8" r="1.7" fill="#e8e8e8"/>
<rect x="859.8" y="152.4" width="3" height="1.4" fill="#2a2e32"/>
<rect x="873.6" y="145.6" width="10.6" height="11.6" fill="#d6edfa" stroke="#4f94c4" stroke-width="1" rx="1.5"/>
<rect x="882" y="145.6" width="3" height="11.6" fill="#8fcaec"/>
<path d="M884.4 151.6h5.6M887.4 149l2.8 2.6-2.8 2.6" fill="none" stroke="#22262a" stroke-width="1.3"/>
<path d="M905.6 143.2v16M899 157.6l12.6-12.4M898.4 148.2l13.6 9" fill="none" stroke="#8a5a1e" stroke-width="1.2"/>
<path d="M897.6 144l3.4 3.6M901 144l-3.4 3.6" fill="none" stroke="#2a2e32" stroke-width="1"/>
<path d="M908.6 143.4L906.8 146.6" stroke="#2a2e32" stroke-width="1" fill="none"/>
<path d="M915 156.8L915 160.4L911.4 160.4Z" fill="#33383d"/>
<rect x="922" y="144.6" width="10.6" height="6" fill="#fdf6e2" stroke="#9a7a3a" stroke-width="0.9"/>
<path d="M932.6 147.6h5.4v4" fill="none" stroke="#2a2e32" stroke-width="1"/>
<path d="M935.6 151.4L940.4 151.4L938 155Z" fill="#2a2e32"/>
<ellipse cx="938" cy="158" rx="3" ry="1.6" fill="#f0f0f0" stroke="#2a2e32" stroke-width="0.9"/>
<circle cx="938" cy="158" r="0.8" fill="#2a2e32"/>
<path d="M947.6 146.4l4.4 6-4.4 6M952 152.4h6" fill="none" stroke="#2a2e32" stroke-width="1.3"/>
<circle cx="947.6" cy="146.2" r="2.3" fill="#3fb86a" stroke="#2a7a48" stroke-width="0.6"/>
<circle cx="947.6" cy="158.6" r="2.3" fill="#3f9fd8" stroke="#2a6a98" stroke-width="0.6"/>
<circle cx="958.4" cy="152.4" r="2.3" fill="#e0503a" stroke="#a0301e" stroke-width="0.6"/>
<path d="M975.4 144.6l6.6 11.6h-13.2z" fill="#e4e4e4" stroke="#bdbdbd" stroke-width="1.4" stroke-linejoin="round"/>
<path d="M975.4 149.6l2.4 4.4h-4.8z" fill="#f3f3f3" stroke="#c4c4c4" stroke-width="0.8"/>
<path d="M980.6 153.4v5M978.2 156h5" fill="none" stroke="#bdbdbd" stroke-width="1.4"/>
<path d="M990.6 146.8h8.4v6.4h-3.4v5h-2.6v-5h-2.4z" fill="#c9c9c9"/>
<path d="M951.8 241.4l5.2 5.2M957 241.4l-5.2 5.2" fill="none" stroke="#7d8389" stroke-width="1.6"/>
<path d="M800.4 661.4L805.4 661.4L802.9 664.2Z" fill="#33383d"/>
<path d="M760 637.8h4.6M762.3 635.5v4.6" fill="none" stroke="#ffffff" stroke-width="1.3"/>
</svg><!--/ICONS-->

<span class="t " id="t0" style="left:668.1px;top:10px;font-size:10px;line-height:12px;transform:scaleX(0.9737);">TEST1234 (Active) - Creo Parametric</span>
<span class="t w" id="t1" style="left:22.9px;top:30px;font-size:11.7px;line-height:16px;transform:scaleX(0.9128);">File</span>
<span class="t tb" id="t2" style="left:76.1px;top:30px;font-size:11.7px;line-height:16px;transform:scaleX(1.0332);">Model</span>
<span class="t tba" id="t3" style="left:142px;top:30px;font-size:11.7px;line-height:16px;transform:scaleX(0.9235);">Analysis</span>
<span class="t tb" id="t4" style="left:215.4px;top:30px;font-size:11.7px;line-height:16px;transform:scaleX(0.9915);">Annotate</span>
<span class="t tb" id="t5" style="left:294.8px;top:30px;font-size:11.7px;line-height:16px;transform:scaleX(0.9708);">Tools</span>
<span class="t tb" id="t6" style="left:354.1px;top:30px;font-size:11.7px;line-height:16px;transform:scaleX(0.9592);">View</span>
<span class="t tb" id="t7" style="left:411px;top:30px;font-size:11.7px;line-height:16px;transform:scaleX(1.0126);">Flexible Modeling</span>
<span class="t tb" id="t8" style="left:536.1px;top:30px;font-size:11.7px;line-height:16px;transform:scaleX(1.0138);">Applications</span>
<span class="t tb" id="t9" style="left:709.3px;top:30px;font-size:11.7px;line-height:16px;transform:scaleX(0.9802);">Live Simulation</span>
<span class="t " id="t10" style="left:24.4px;top:54px;font-size:9.5px;line-height:12px;transform:scaleX(0.9385);">Analysis</span>
<span class="t " id="t11" style="left:24.4px;top:76px;font-size:9.5px;line-height:12px;transform:scaleX(0.9249);">Saved Analysis</span>
<span class="t " id="t12" style="left:24.4px;top:96px;font-size:9.5px;line-height:12px;transform:scaleX(1.0011);">Performance Monitor</span>
<span class="t dis" id="t13" style="left:140.9px;top:54px;font-size:9.5px;line-height:12px;transform:scaleX(0.9543);">User-Defined Analysis</span>
<span class="t " id="t14" style="left:140.9px;top:76px;font-size:9.5px;line-height:12px;transform:scaleX(0.9253);">Excel Analysis</span>
<span class="t dis" id="t15" style="left:140.9px;top:96px;font-size:9.5px;line-height:12px;transform:scaleX(0.9574);">Toolkit-Based</span>
<span class="t dis" id="t16" style="left:252.2px;top:54px;font-size:9.5px;line-height:12px;transform:scaleX(0.9819);">Mathcad Analysis</span>
<span class="t dis" id="t17" style="left:252.2px;top:76px;font-size:9.5px;line-height:12px;transform:scaleX(0.9533);">Prime Analysis</span>
<span class="t " id="t18" style="left:252.2px;top:96px;font-size:9.5px;line-height:12px;transform:scaleX(0.9496);">External Analysis</span>
<span class="t " id="t19" style="left:352.1px;top:54px;font-size:9.5px;line-height:12px;transform:scaleX(0.9397);">Mass Properties</span>
<span class="t " id="t20" style="left:352.1px;top:76px;font-size:9.5px;line-height:12px;transform:scaleX(0.9401);">Short Edge</span>
<span class="t " id="t21" style="left:352.1px;top:96px;font-size:9.5px;line-height:12px;transform:scaleX(0.9236);">Thickness</span>
<span class="t " id="t22" style="left:558.4px;top:54px;font-size:9.5px;line-height:12px;transform:scaleX(0.9509);">Geometry Report</span>
<span class="t " id="t23" style="left:558.4px;top:76px;font-size:9.5px;line-height:12px;transform:scaleX(0.9469);">Draft</span>
<span class="t " id="t24" style="left:558.4px;top:96px;font-size:9.5px;line-height:12px;transform:scaleX(0.9172);">Pairs Clearance</span>
<span class="t " id="t25" style="left:661.4px;top:54px;font-size:9.5px;line-height:12px;transform:scaleX(0.9313);">Mesh Surface</span>
<span class="t " id="t26" style="left:661.4px;top:76px;font-size:9.5px;line-height:12px;transform:scaleX(0.9758);">Dihedral Angle</span>
<span class="t " id="t27" style="left:661.4px;top:96px;font-size:9.5px;line-height:12px;transform:scaleX(0.9564);">Curvature</span>
<span class="t dis" id="t28" style="left:797.4px;top:54px;font-size:9.5px;line-height:12px;transform:scaleX(0.9568);">Sensitivity Analysis</span>
<span class="t dis" id="t29" style="left:797.4px;top:76px;font-size:9.5px;line-height:12px;transform:scaleX(1.0034);">Feasibility/Optimization</span>
<span class="t dis" id="t30" style="left:797.4px;top:96px;font-size:9.5px;line-height:12px;transform:scaleX(0.9459);">Statistical Design Study</span>
<span class="t " id="t31" style="left:439.7px;top:86px;font-size:9.5px;line-height:12px;transform:scaleX(0.9440);">Measure</span>
<span class="t dis" id="t32" style="left:486.6px;top:86px;font-size:9.5px;line-height:12px;transform:scaleX(0.9806);">Simulation</span>
<span class="t dis" id="t33" style="left:496.7px;top:98px;font-size:9.5px;line-height:12px;transform:scaleX(0.9267);">Probe</span>
<span class="t " id="t34" style="left:734.5px;top:86px;font-size:9.5px;line-height:12px;transform:scaleX(0.9490);">Tolerance</span>
<span class="t " id="t35" style="left:734px;top:98px;font-size:9.5px;line-height:12px;transform:scaleX(0.9470);">Analysis</span>
<span class="t dis" id="t36" style="left:912.7px;top:86px;font-size:9.5px;line-height:12px;transform:scaleX(0.9467);">Simulate</span>
<span class="t dis" id="t37" style="left:914px;top:98px;font-size:9.5px;line-height:12px;transform:scaleX(0.9131);">Analysis</span>
<span class="t lb" id="t38" style="left:40px;top:117px;font-size:9.5px;line-height:12px;transform:scaleX(0.9667);">Manage</span>
<span class="t lb" id="t39" style="left:209.9px;top:117px;font-size:9.5px;line-height:12px;transform:scaleX(0.9684);">Custom</span>
<span class="t lb" id="t40" style="left:350px;top:117px;font-size:9.5px;line-height:12px;transform:scaleX(0.9767);">Model Report</span>
<span class="t lb" id="t41" style="left:440.8px;top:117px;font-size:9.5px;line-height:12px;transform:scaleX(0.9251);">Measure</span>
<span class="t lb" id="t42" style="left:496.7px;top:117px;font-size:9.5px;line-height:12px;transform:scaleX(0.9507);">Query</span>
<span class="t lb" id="t43" style="left:591.4px;top:117px;font-size:9.5px;line-height:12px;transform:scaleX(0.9615);">Inspect Geometry</span>
<span class="t lb" id="t44" style="left:815px;top:117px;font-size:9.5px;line-height:12px;transform:scaleX(0.9378);">Design Study</span>
<span class="t pt" id="t45" style="left:28px;top:139px;font-size:9.5px;line-height:12px;transform:scaleX(0.9320);">Model Tree</span>
<span class="t ptg" id="t46" style="left:103.8px;top:139px;font-size:9.5px;line-height:12px;transform:scaleX(0.9307);">Folder ...</span>
<span class="t ptg" id="t47" style="left:169.9px;top:139px;font-size:9.5px;line-height:12px;transform:scaleX(0.9530);">Favori...</span>
<span class="t hd" id="t48" style="left:25.6px;top:162px;font-size:9.5px;line-height:12px;transform:scaleX(0.9793);font-weight:bold;">Model Tree</span>
<span class="t tr" id="t49" style="left:28.7px;top:181px;font-size:9.5px;line-height:12px;transform:scaleX(0.8148);">TEST1234.PRT</span>
<span class="t tr" id="t50" style="left:44.6px;top:197px;font-size:9.5px;line-height:12px;transform:scaleX(0.8118);">RIGHT</span>
<span class="t tr" id="t51" style="left:44.6px;top:213px;font-size:9.5px;line-height:12px;transform:scaleX(0.8058);">TOP</span>
<span class="t tr" id="t52" style="left:44.6px;top:228px;font-size:9.5px;line-height:12px;transform:scaleX(0.8283);">FRONT</span>
<span class="t tr" id="t53" style="left:44.6px;top:244px;font-size:9.5px;line-height:12px;transform:scaleX(0.7899);">CS0</span>
<span class="t tr" id="t54" style="left:44.6px;top:259px;font-size:9.5px;line-height:12px;transform:scaleX(0.6936);">X</span>
<span class="t tr" id="t55" style="left:44.6px;top:275px;font-size:9.5px;line-height:12px;transform:scaleX(0.6936);">Y</span>
<span class="t tr" id="t56" style="left:44.6px;top:290px;font-size:9.5px;line-height:12px;transform:scaleX(0.6882);">Z</span>
<span class="t tr" id="t57" style="left:44.6px;top:306px;font-size:9.5px;line-height:12px;transform:scaleX(0.9122);">Extrude 1</span>
<span class="t tr" id="t58" style="left:44.6px;top:322px;font-size:9.5px;line-height:12px;transform:scaleX(0.9437);">Round 1</span>
<span class="t tr" id="t59" style="left:44.6px;top:337px;font-size:9.5px;line-height:12px;transform:scaleX(0.9213);">Insert Here</span>
<span class="t mn" id="t60" style="left:564.7px;top:137px;font-size:9.5px;line-height:12px;transform:scaleX(0.9622);">Offset Analysis</span>
<span class="t mn" id="t61" style="left:564.7px;top:154px;font-size:9.5px;line-height:12px;transform:scaleX(0.9027);">Radius</span>
<span class="t mn" id="t62" style="left:564.7px;top:171px;font-size:9.5px;line-height:12px;transform:scaleX(0.9720);">Deviation</span>
<span class="t mn" id="t63" style="left:564.7px;top:188px;font-size:9.5px;line-height:12px;transform:scaleX(0.9347);">Shadow</span>
<span class="t mn" id="t64" style="left:564.7px;top:205px;font-size:9.5px;line-height:12px;transform:scaleX(0.9609);">Reflection</span>
<span class="t mn" id="t65" style="left:564.7px;top:222px;font-size:9.5px;line-height:12px;transform:scaleX(0.9343);">Knots</span>
<span class="t mn" id="t66" style="left:564.7px;top:240px;font-size:9.5px;line-height:12px;transform:scaleX(0.9090);">Slope</span>
<span class="t mn" id="t67" style="left:564.7px;top:257px;font-size:9.5px;line-height:12px;transform:scaleX(0.9925);">Connection</span>
<span class="t dt" id="t68" style="left:814.1px;top:240px;font-size:9.5px;line-height:12px;transform:scaleX(0.9852);">Connection Analysis</span>
<span class="t dl" id="t69" style="left:755.3px;top:264px;font-size:9.5px;line-height:12px;transform:scaleX(0.9076);">References:</span>
<span class="t dl" id="t70" style="left:760.5px;top:282px;font-size:9.5px;line-height:12px;transform:scaleX(0.9468);">SolidGeom</span>
<span class="t dl" id="t71" style="left:771.2px;top:328px;font-size:9.5px;line-height:12px;transform:scaleX(0.9872);">Intersection only</span>
<span class="t dl" id="t72" style="left:755.3px;top:357px;font-size:9.5px;line-height:12px;transform:scaleX(0.9802);">Connection:</span>
<span class="t dl" id="t73" style="left:825.9px;top:359px;font-size:9.5px;line-height:12px;transform:scaleX(0.9577);">G0 - Position</span>
<span class="t dl" id="t74" style="left:825.9px;top:373px;font-size:9.5px;line-height:12px;transform:scaleX(0.9444);">G1 - Tangency</span>
<span class="t dl" id="t75" style="left:825.9px;top:388px;font-size:9.5px;line-height:12px;transform:scaleX(0.9518);">G2 - Curvature</span>
<span class="t dl" id="t76" style="left:825.9px;top:403px;font-size:9.5px;line-height:12px;transform:scaleX(0.9674);">G3 - Acceleration</span>
<span class="t dl" id="t77" style="left:755.3px;top:427px;font-size:9.5px;line-height:12px;transform:scaleX(0.9260);">Tolerance:</span>
<span class="t dl" id="t78" style="left:816.7px;top:427px;font-size:9.5px;line-height:12px;transform:scaleX(0.8782);">0.500000</span>
<span class="t dl" id="t79" style="left:884.1px;top:427px;font-size:9.5px;line-height:12px;transform:scaleX(0.9395);">deg</span>
<span class="t dl" id="t80" style="left:758.2px;top:453px;font-size:9.5px;line-height:12px;transform:scaleX(0.9627);">Tangency check failed</span>
<span class="t dl" id="t81" style="left:758.2px;top:465px;font-size:9.5px;line-height:12px;transform:scaleX(0.9644);">- Tangency values are different.</span>
<span class="t dl" id="t82" style="left:758.2px;top:488px;font-size:9.5px;line-height:12px;transform:scaleX(0.9579);">Min. dihedral angle: 0.0000 deg</span>
<span class="t dl" id="t83" style="left:758.2px;top:500px;font-size:9.5px;line-height:12px;transform:scaleX(0.9473);">Max. dihedral angle: 90.0000 deg</span>
<span class="t dl" id="t84" style="left:754.9px;top:597px;font-size:9.5px;line-height:12px;transform:scaleX(0.9005);">Style:</span>
<span class="t dl" id="t85" style="left:830.4px;top:598px;font-size:9.5px;line-height:12px;transform:scaleX(0.9985);">Highlight edges</span>
<span class="t dl" id="t86" style="left:830.4px;top:612px;font-size:9.5px;line-height:12px;transform:scaleX(0.9317);">Show spikes</span>
<span class="t dl" id="t87" style="left:773.5px;top:633px;font-size:9.5px;line-height:12px;transform:scaleX(0.9717);">Display options</span>
<span class="t dl" id="t88" style="left:761.4px;top:658px;font-size:9.5px;line-height:12px;transform:scaleX(0.9631);">Quick</span>
<span class="t ph" id="t89" style="left:817.5px;top:658px;font-size:9.5px;line-height:12px;transform:scaleX(0.8846);">ANALYSIS_CONNECTION_1</span>
<span class="t dl" id="t90" style="left:762.6px;top:697px;font-size:9.5px;line-height:12px;transform:scaleX(0.9106);">Repeat</span>
<span class="t dl" id="t91" style="left:875.6px;top:697px;font-size:9.5px;line-height:12px;transform:scaleX(0.9174);">OK</span>
<span class="t dl" id="t92" style="left:922.1px;top:697px;font-size:9.5px;line-height:12px;transform:scaleX(0.9264);">Cancel</span>
<span class="t qa" id="t93" style="left:394.6px;top:6px;font-size:13px;line-height:16px;transform:scaleX(0.8305);font-weight:bold;">[ ]</span>
<span class="t qa" id="t94" style="left:411.7px;top:6px;font-size:12.5px;line-height:16px;transform:scaleX(0.8234);font-weight:bold;">d=</span>
<span class="t qa" id="t95" style="left:743.9px;top:55px;font-size:12.5px;line-height:16px;transform:scaleX(0.8041);font-weight:bold;">±.01</span>
<span class="t w" id="t96" style="left:946.6px;top:563px;font-size:11px;line-height:14px;transform:scaleX(1.1102);font-weight:bold;font-family:"Liberation Serif",serif;">i</span>
</body></html>
